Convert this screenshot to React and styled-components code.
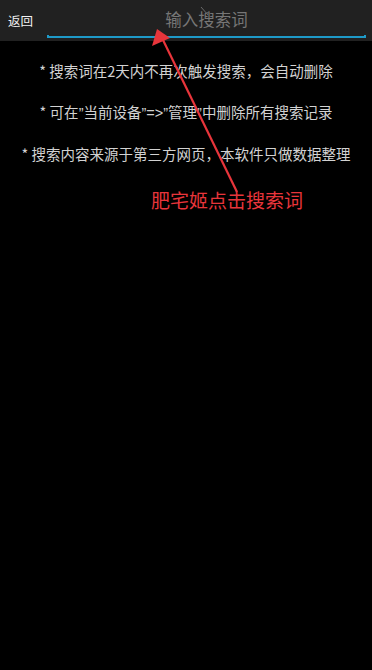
import * as React from "react"
import styled, { createGlobalStyle } from "styled-components"

const GlobalStyle = createGlobalStyle`
  html, body {
    margin: 0;
    padding: 0;
    background: #000;
  }
  body {
    font-family: "Noto Sans CJK SC", "Noto Sans", sans-serif;
  }
`

const Screen = styled.div`
  position: relative;
  width: 372px;
  height: 670px;
  background: #000;
  overflow: hidden;
`

const Header = styled.div`
  display: flex;
  align-items: center;
  height: 41px;
  background: #212121;
  padding: 0 6px 0 8px;
  box-sizing: border-box;
`

const BackButton = styled.div`
  color: #f2f2f2;
  font-size: 12.5px;
  width: 39px;
  flex: none;
  margin-top: -1px;
`

const SearchField = styled.div`
  position: relative;
  flex: 1;
  height: 41px;
  display: flex;
  align-items: center;
  justify-content: center;
  color: #767676;
  font-size: 16.5px;
  padding-bottom: 4px;
  box-sizing: border-box;

  &:after {
    content: "";
    position: absolute;
    left: 0;
    right: 0;
    bottom: 3px;
    height: 3px;
    border: 2px solid #1e9ac8;
    border-top: none;
    box-sizing: border-box;
  }
`

const Tips = styled.div`
  display: flex;
  flex-direction: column;
  align-items: center;
  gap: 19px;
  padding-top: 19px;
`

const Tip = styled.div`
  color: #d2d2d2;
  font-size: 14.5px;
  line-height: 22px;
  white-space: nowrap;
`

const Quote = styled.span`
  font-family: "Liberation Sans", sans-serif;
`

const Note = styled.div`
  color: #e8353b;
  font-size: 19px;
  line-height: 26px;
  margin: 22px 0 0 151px;
  white-space: nowrap;
`

const Arrow = styled.svg`
  position: absolute;
  left: 0;
  top: 0;
  pointer-events: none;
`

export default function App() {
  return (
    <>
      <GlobalStyle />
      <Screen>
        <Header>
          <BackButton>返回</BackButton>
          <SearchField>输入搜索词</SearchField>
        </Header>
        <Tips>
          <Tip>* 搜索词在2天内不再次触发搜索，会自动删除</Tip>
          <Tip>
            * 可在<Quote>”</Quote>当前设备<Quote>”=&gt;”</Quote>管理<Quote>”</Quote>中删除所有搜索记录
          </Tip>
          <Tip>* 搜索内容来源于第三方网页，本软件只做数据整理</Tip>
        </Tips>
        <Note>肥宅姬点击搜索词</Note>
        <Arrow width="372" height="670" viewBox="0 0 372 670">
          <line x1="201" y1="7" x2="208" y2="15" stroke="#6a6a6a" strokeWidth="1" />
          <line x1="237" y1="192" x2="163" y2="40" stroke="#e8353b" strokeWidth="2.2" />
          <polygon points="157,29 152,46 170,38" fill="#e8353b" />
        </Arrow>
      </Screen>
    </>
  )
}
